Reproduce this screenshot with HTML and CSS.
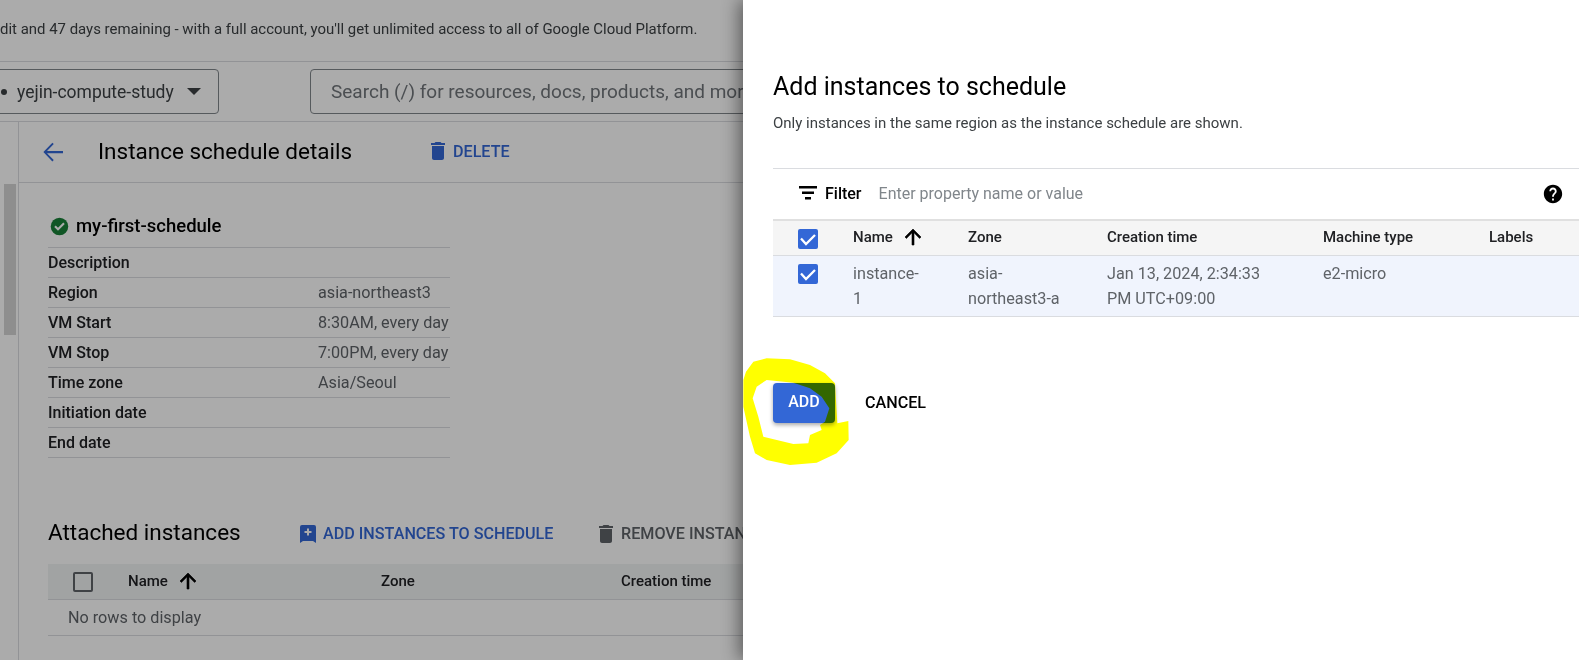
FILE: index.html
```html
<!DOCTYPE html>
<html lang="en">
<head>
<meta charset="utf-8">
<title>Add instances to schedule</title>
<link rel="stylesheet" href="styles.css">
</head>
<body>
<div class="page">
  <div class="banner">dit and 47 days remaining - with a full account, you'll get unlimited access to all of Google Cloud Platform.</div>
  <div class="topbar">
    <div class="project"><span class="dot"></span><span class="project-name">yejin-compute-study</span><span class="caret"></span></div>
    <div class="search">Search (/) for resources, docs, products, and more</div>
  </div>
  <div class="main">
    <div class="rail"><div class="thumb"></div></div>
    <div class="content">
      <div class="pagehead">
        <svg class="back" viewBox="0 0 24 24"><path d="M20 11.100H7.200l5.400-5.500-1.100-1.100L4.300 12l7.200 7.500 1.100-1.100L7.200 12.900H20z"/></svg>
        <h1 class="title">Instance schedule details</h1>
        <div class="action blue delete-action">
          <svg class="ico" viewBox="0 0 24 24"><path d="M6 19c0 1.100.9 2 2 2h8c1.100 0 2-.9 2-2V7H6v12zM19 4h-3.500l-1-1h-5l-1 1H5v2h14V4z"/></svg>DELETE</div>
      </div>
      <div class="body">
        <div class="name-row">
          <svg class="ok" viewBox="0 0 24 24"><circle cx="12" cy="12" r="10" fill="#188038"/><path d="M10.300 16.800L6 12.500l1.700-1.700 2.600 2.600 6-6L18 9.100z" fill="#fff"/></svg>
          <span>my-first-schedule</span>
        </div>
        <div class="details">
          <div class="d-row"><span class="d-key">Description</span><span class="d-val"></span></div>
          <div class="d-row"><span class="d-key">Region</span><span class="d-val">asia-northeast3</span></div>
          <div class="d-row"><span class="d-key">VM Start</span><span class="d-val">8:30AM, every day</span></div>
          <div class="d-row"><span class="d-key">VM Stop</span><span class="d-val">7:00PM, every day</span></div>
          <div class="d-row"><span class="d-key">Time zone</span><span class="d-val">Asia/Seoul</span></div>
          <div class="d-row"><span class="d-key">Initiation date</span><span class="d-val"></span></div>
          <div class="d-row"><span class="d-key">End date</span><span class="d-val"></span></div>
        </div>
        <div class="attached-head">
          <h2 class="title attached-title">Attached instances</h2>
          <div class="action blue add-action">
            <svg class="ico" viewBox="0 0 24 24"><path fill-rule="evenodd" d="M4 5a2 2 0 0 1 2-2h12a2 2 0 0 1 2 2v16l-3-2H7l-3 2zM11 6.500h2V9h2.500v2H13v2.500h-2V11H8.500V9H11z"/></svg>ADD INSTANCES TO SCHEDULE</div>
          <div class="action grey remove-action">
            <svg class="ico" viewBox="0 0 24 24"><path d="M6 19c0 1.100.9 2 2 2h8c1.100 0 2-.9 2-2V7H6v12zM19 4h-3.500l-1-1h-5l-1 1H5v2h14V4z"/></svg>REMOVE INSTANCES</div>
        </div>
        <div class="att-table">
          <div class="att-header">
            <span class="box"></span>
            <span class="att-name">Name<svg class="arrow" viewBox="0 0 24 24"><path d="M4 12l1.410 1.410L11 7.830V20h2V7.830l5.580 5.590L20 12l-8-8-8 8z"/></svg></span>
            <span class="att-zone">Zone</span>
            <span>Creation time</span>
          </div>
          <div class="att-empty">No rows to display</div>
        </div>
      </div>
    </div>
  </div>
</div>
<div class="scrim"></div>
<aside class="panel">
  <h2 class="panel-title">Add instances to schedule</h2>
  <p class="panel-sub">Only instances in the same region as the instance schedule are shown.</p>
  <div class="filter">
    <svg class="filter-ico" viewBox="0 0 18 14"><path d="M0 0h18v2.500H0zM3 5.500h12V8H3zM6 11h6v2.500H6z"/></svg>
    <span class="filter-label">Filter</span>
    <span class="filter-input">Enter property name or value</span>
    <svg class="help" viewBox="0 0 24 24"><path d="M12 2C6.480 2 2 6.480 2 12s4.480 10 10 10 10-4.480 10-10S17.520 2 12 2zm1 17h-2v-2h2v2zm2.070-7.750l-.9.920C13.450 12.900 13 13.500 13 15h-2v-.5c0-1.100.45-2.100 1.170-2.830l1.240-1.260c.37-.36.59-.86.59-1.410 0-1.100-.9-2-2-2s-2 .9-2 2H8c0-2.210 1.790-4 4-4s4 1.790 4 4c0 .88-.36 1.680-.93 2.250z"/></svg>
  </div>
  <div class="grid grid-head">
    <span class="check"><svg viewBox="0 0 20 20"><path d="M3 9.500l5 5.500 9-9" fill="none" stroke="#fff" stroke-width="2.300"/></svg></span>
    <span class="att-name">Name<svg class="arrow" viewBox="0 0 24 24"><path d="M4 12l1.410 1.410L11 7.830V20h2V7.830l5.580 5.590L20 12l-8-8-8 8z"/></svg></span>
    <span>Zone</span>
    <span>Creation time</span>
    <span>Machine type</span>
    <span>Labels</span>
  </div>
  <div class="grid grid-row">
    <span class="check"><svg viewBox="0 0 20 20"><path d="M3 9.500l5 5.500 9-9" fill="none" stroke="#fff" stroke-width="2.300"/></svg></span>
    <span>instance-<br>1</span>
    <span>asia-<br>northeast3-a</span>
    <span>Jan 13, 2024, 2:34:33<br>PM UTC+09:00</span>
    <span>e2-micro</span>
    <span></span>
  </div>
  <div class="buttons">
    <div class="btn-add">ADD</div>
    <div class="btn-cancel">CANCEL</div>
  </div>
</aside>
<svg class="marker" viewBox="0 0 660 420"><path fill="#ff0" fill-rule="evenodd" d="M40 120L48 95 70 65 110 55 180 58 240 75 285 100 315 130 322 250 355 243 356 300 320 340 260 368 180 375 110 360 75 340 60 290 40 200ZM68 175L80 140 110 120 190 128 240 145 275 170 298 205 285 245 270 255 275 270 240 285 235 310 190 312 100 290 85 230Z"/></svg>
</body>
</html>
```
FILE: styles.css
```css
* { box-sizing: border-box; }
html, body { margin: 0; height: 660px; overflow: hidden; }
body { font-family: Roboto, "Liberation Sans", sans-serif; font-size: 15px; color: #202124; background: #fff; position: relative; }
.page { height: 660px; overflow: hidden; }
.banner { height: 62px; border-bottom: 1px solid #dadce0; padding-top: 19px; font-size: 14.950px; line-height: 20px; color: #3c4043; white-space: nowrap; }
.topbar { height: 60px; border-bottom: 1px solid #dadce0; display: flex; align-items: center; }
.project { width: 227px; height: 45px; margin-left: -8px; flex: none; border: 1px solid #80868b; border-radius: 4px; display: flex; align-items: center; padding-left: 8px; font-size: 17.500px; color: #3c4043; }
.dot { width: 6px; height: 6px; border-radius: 50%; background: #3c4043; margin-right: 10px; flex: none; }
.project-name { flex: none; }
.caret { border-left: 7.500px solid transparent; border-right: 7.500px solid transparent; border-top: 7.500px solid #3c4043; margin-left: 13px; }
.search { margin-left: 91px; width: 600px; height: 45px; flex: none; border: 1px solid #80868b; border-radius: 4px; padding-left: 20px; line-height: 43px; font-size: 19px; color: #70757a; white-space: nowrap; overflow: hidden; }
.main { display: flex; height: 538px; }
.rail { width: 19px; flex: none; border-right: 1px solid #dadce0; padding: 62px 2px 0 4px; }
.thumb { height: 151px; background: #d4d4d4; }
.content { flex: 1; min-width: 0; }
.pagehead { height: 61px; border-bottom: 1px solid #dadce0; display: flex; align-items: center; padding-left: 19px; }
.back { width: 30px; height: 30px; fill: #3367d6; flex: none; }
.title { margin: 0; font-size: 22.500px; font-weight: 400; color: #000; white-space: nowrap; }
.pagehead .title { margin-left: 30px; width: 262px; padding-bottom: 2px; }
.action { display: flex; align-items: center; font-size: 16.150px; font-weight: 500; white-space: nowrap; flex: none; }
.blue { color: #3367d6; }
.grey { color: #5f6368; }
.ico { width: 24px; height: 24px; fill: currentColor; margin-right: 3px; flex: none; }
.delete-action { margin-left: 66px; padding-bottom: 2px; }
.body { padding: 0 0 0 29px; }
.name-row { height: 64px; padding-top: 22px; display: flex; align-items: center; font-size: 18.500px; font-weight: 500; color: #000; }
.ok { width: 21px; height: 21px; margin: 0 6px 0 1px; flex: none; }
.details { width: 402px; border-top: 1px solid #dadce0; }
.d-row { height: 30px; border-bottom: 1px solid #dadce0; display: flex; align-items: center; font-size: 16.200px; padding-bottom: 1px; }
.d-key { width: 270px; font-size: 16px; font-weight: 500; color: #202124; flex: none; }
.d-val { color: #5f6368; white-space: nowrap; }
.attached-head { display: flex; align-items: center; margin-top: 57px; height: 34px; }
.attached-title { width: 248px; flex: none; padding-bottom: 1px; }
.add-action { width: 298px; padding-top: 3px; }
.remove-action { padding-top: 3px; }
.att-table { margin-top: 15px; width: 900px; }
.att-header { height: 36px; background: #f1f3f4; border-bottom: 1px solid #dadce0; display: flex; align-items: center; padding-left: 25px; padding-bottom: 2px; font-weight: 500; }
.box { width: 20px; height: 20px; border: 2px solid #5f6368; border-radius: 2px; flex: none; margin: 2px 35px 0 0; }
.att-name { display: flex; align-items: center; font-weight: 500; }
.att-header .att-name { width: 253px; }
.att-zone { width: 240px; }
.arrow { width: 24px; height: 24px; fill: #000; stroke: #000; stroke-width: .6; margin-left: 8px; }
.att-empty { height: 36px; line-height: 36px; padding-left: 20px; border-bottom: 1px solid #dadce0; color: #5f6368; font-size: 16.200px; }
.scrim { position: absolute; inset: 0; background: rgba(0, 0, 0, .33); }
.panel { position: absolute; top: 0; bottom: 0; left: 743px; right: 0; background: #fff; padding: 68px 0 0 30px; box-shadow: -4px 0 16px rgba(0, 0, 0, .45); overflow: hidden; }
.panel-title { margin: 0; font-size: 25px; font-weight: 400; line-height: 38px; color: #000; }
.panel-sub { margin: 7px 0 0; font-size: 15px; line-height: 20px; color: #3c4043; }
.filter { margin-top: 35px; height: 51px; border-top: 1px solid #dadce0; display: flex; align-items: center; padding: 0 15px 2px 26px; }
.filter-ico { width: 18px; height: 14px; fill: #000; flex: none; margin-right: 8px; }
.filter-label { font-size: 16px; font-weight: 500; color: #000; margin-right: 17px; }
.filter-input { font-size: 16px; color: #80868b; flex: 1; }
.help { width: 22px; height: 22px; fill: #000; flex: none; margin-top: 2px; }
.grid { display: grid; grid-template-columns: 80px 115px 139px 216px 166px 1fr; }
.grid-head { height: 37px; background: #f5f5f5; border-top: 2px solid #e0e0e0; border-bottom: 1px solid #dadce0; align-items: center; font-weight: 500; color: #202124; padding-bottom: 2px; }
.grid-head .check { margin-top: 3px; }
.grid-row { height: 61px; background: #f0f4fd; border-bottom: 1px solid #dadce0; font-size: 16.200px; line-height: 25px; padding-top: 5px; color: #5f6368; }
.check { display: block; width: 20px; height: 20px; margin-left: 25px; border-radius: 2px; background: #3367d6; }
.check svg { display: block; width: 20px; height: 20px; }
.grid-row .check { margin-top: 3px; }
.buttons { margin-top: 66px; display: flex; align-items: center; }
.btn-add { width: 62px; height: 40px; background: #3367d6; color: #fff; font-size: 16px; font-weight: 500; border-radius: 4px; text-align: center; line-height: 38px; box-shadow: 0 2px 4px rgba(0, 0, 0, .35); }
.btn-cancel { margin-left: 30px; font-size: 16.150px; font-weight: 500; color: #000; padding-bottom: 2px; }
.marker { position: absolute; left: 730px; top: 340px; width: 220px; height: 140px; mix-blend-mode: multiply; pointer-events: none; }
```
